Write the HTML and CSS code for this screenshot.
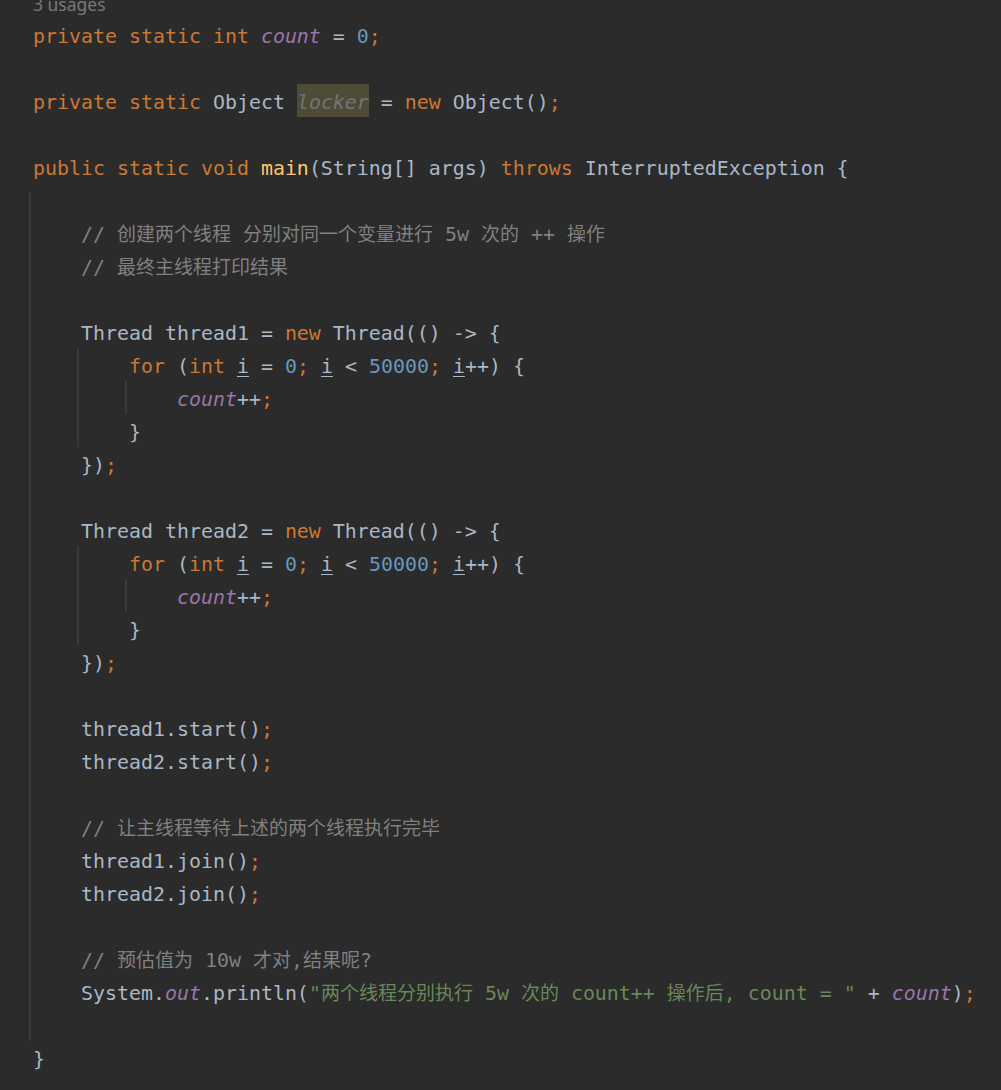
FILE: index.html
```html
<!DOCTYPE html>
<html lang="zh">
<head>
<meta charset="utf-8">
<title>Main.java</title>
<link rel="stylesheet" href="styles.css">
</head>
<body>
<div class="editor">
  <div class="usages">3 usages</div>
  <div class="line"><span class="k">private static int </span><span class="f">count</span> = <span class="n">0</span><span class="k">;</span></div>
  <div class="line"> </div>
  <div class="line"><span class="k">private static </span>Object <span class="hl"><span class="u">locker</span></span> = <span class="k">new </span>Object()<span class="k">;</span></div>
  <div class="line"> </div>
  <div class="line"><span class="k">public static void </span><span class="m">main</span>(String[] args) <span class="k">throws </span>InterruptedException {</div>
  <div class="blk blk-main">
    <div class="line"> </div>
    <div class="line">    <span class="c">// <span class="cj">创建两个线程</span> <span class="cj">分别对同一个变量进行</span> 5w <span class="cj">次的</span> ++ <span class="cj">操作</span></span></div>
    <div class="line">    <span class="c">// <span class="cj">最终主线程打印结果</span></span></div>
    <div class="line"> </div>
    <div class="line">    Thread thread1 = <span class="k">new </span>Thread(() -&gt; {</div>
    <div class="blk blk-in">
      <div class="line">    <span class="k">for </span>(<span class="k">int </span><span class="v">i</span> = <span class="n">0</span><span class="k">; </span><span class="v">i</span> &lt; <span class="n">50000</span><span class="k">; </span><span class="v">i</span>++) {</div>
      <div class="blk blk-in">
        <div class="line">    <span class="f">count</span>++<span class="k">;</span></div>
      </div>
      <div class="line">    }</div>
    </div>
    <div class="line">    })<span class="k">;</span></div>
    <div class="line"> </div>
    <div class="line">    Thread thread2 = <span class="k">new </span>Thread(() -&gt; {</div>
    <div class="blk blk-in">
      <div class="line">    <span class="k">for </span>(<span class="k">int </span><span class="v">i</span> = <span class="n">0</span><span class="k">; </span><span class="v">i</span> &lt; <span class="n">50000</span><span class="k">; </span><span class="v">i</span>++) {</div>
      <div class="blk blk-in">
        <div class="line">    <span class="f">count</span>++<span class="k">;</span></div>
      </div>
      <div class="line">    }</div>
    </div>
    <div class="line">    })<span class="k">;</span></div>
    <div class="line"> </div>
    <div class="line">    thread1.start()<span class="k">;</span></div>
    <div class="line">    thread2.start()<span class="k">;</span></div>
    <div class="line"> </div>
    <div class="line">    <span class="c">// <span class="cj">让主线程等待上述的两个线程执行完毕</span></span></div>
    <div class="line">    thread1.join()<span class="k">;</span></div>
    <div class="line">    thread2.join()<span class="k">;</span></div>
    <div class="line"> </div>
    <div class="line">    <span class="c">// <span class="cj">预估值为</span> 10w <span class="cj">才对</span>,<span class="cj">结果呢</span>?</span></div>
    <div class="line">    System.<span class="f">out</span>.println(<span class="s">"<span class="cj">两个线程分别执行</span> 5w <span class="cj">次的</span> count++ <span class="cj">操作后</span>, count = "</span> + <span class="f">count</span>)<span class="k">;</span></div>
    <div class="line"> </div>
  </div>
  <div class="line">}</div>
</div>
</body>
</html>
```
FILE: styles.css
```css
html, body {
  margin: 0;
  padding: 0;
  background: #2b2b2b;
}

.editor {
  padding-left: 33px;
  color: #a9b7c6;
  font-family: "DejaVu Sans Mono", monospace;
  font-size: 19.93px;
  min-height: 1090px;
}

.usages {
  height: 18px;
  line-height: 8px;
  font-family: "Noto Sans", sans-serif;
  font-size: 17.5px;
  color: #787878;
  white-space: nowrap;
}

.line {
  box-sizing: border-box;
  height: 33px;
  padding-top: 5px;
  line-height: 28px;
  white-space: pre;
}

.blk {
  padding-left: 4px;
  background-image: linear-gradient(#3a3a3a, #3a3a3a);
  background-repeat: no-repeat;
  background-position: 0 0;
  background-size: 2px 100%;
}

.blk-main {
  margin-left: -4px;
  background-position: 0 9px;
  background-size: 2px calc(100% - 9px);
}

.blk-in {
  margin-left: 44px;
}

.k { color: #cc7832; }
.n { color: #6897bb; }
.m { color: #ffc66d; }
.f { color: #9876aa; font-style: italic; }
.c { color: #808080; }
.s { color: #6a8759; }
.u { color: #72737a; font-style: italic; }

.v {
  text-decoration: underline;
  text-decoration-thickness: 1px;
  text-underline-offset: 3px;
}

.hl {
  display: inline-block;
  vertical-align: top;
  box-sizing: border-box;
  height: 33px;
  margin-top: -5px;
  padding-top: 5px;
  background: #4e4b37;
}

.cj {
  font-family: "Noto Sans CJK SC", sans-serif;
  font-size: 19px;
  line-height: 20px;
}
```
